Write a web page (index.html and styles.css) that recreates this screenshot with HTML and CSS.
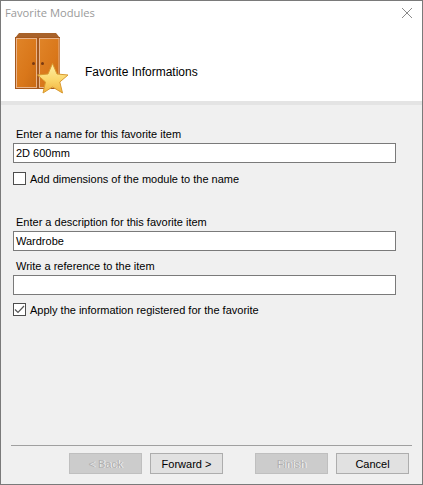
FILE: index.html
```html
<!DOCTYPE html>
<html lang="en">
<head>
<meta charset="utf-8">
<title>Favorite Modules</title>
<link rel="stylesheet" href="styles.css">
</head>
<body>
<div class="window">
  <div class="top">
    <div class="titlebar">
      <span class="title">Favorite Modules</span>
      <svg class="close" width="12" height="12" viewBox="0 0 12 12"><path d="M1 1 L11 11 M11 1 L1 11" stroke="#8a8a8a" stroke-width="1" fill="none"/></svg>
    </div>
    <div class="header">
      <svg class="logo" width="54" height="64" viewBox="0 0 54 64">
        <defs>
          <linearGradient id="wood" x1="0" y1="0" x2="1" y2="1">
            <stop offset="0" stop-color="#e08428"/>
            <stop offset="0.6" stop-color="#d9771a"/>
            <stop offset="1" stop-color="#c96a14"/>
          </linearGradient>
          <linearGradient id="gold" x1="0" y1="0" x2="0" y2="1">
            <stop offset="0" stop-color="#fff0a8"/>
            <stop offset="0.55" stop-color="#fbd76c"/>
            <stop offset="1" stop-color="#f2b23e"/>
          </linearGradient>
        </defs>
        <path d="M0 6 L4 1 H41 L45 6 Z" fill="#a8622a"/>
        <rect x="0" y="5" width="45" height="52" fill="#a4581e"/>
        <rect x="1.500" y="6.500" width="20" height="49" fill="url(#wood)" stroke="#eab48a"/>
        <rect x="24.500" y="6.500" width="19.500" height="49" fill="url(#wood)" stroke="#eab48a"/>
        <circle cx="18.500" cy="31.500" r="1.500" fill="#7a3a12"/>
        <circle cx="27.500" cy="31.500" r="1.500" fill="#7a3a12"/>
        <path d="M37.500 31.500 L42 42 L53 43 L44.800 50 L47.500 61 L37.500 55 L28 61 L30.500 50 L22.500 43 L33 42 Z" fill="url(#gold)" stroke="#d99a30" stroke-width="1" stroke-linejoin="round"/>
      </svg>
      <span class="heading">Favorite Informations</span>
    </div>
    <div class="band"></div>
  </div>
  <div class="form">
    <label class="field-label first">Enter a name for this favorite item</label>
    <div class="input">2D 600mm</div>
    <div class="check check-one">
      <span class="box"></span>
      <span>Add dimensions of the module to the name</span>
    </div>
    <label class="field-label second">Enter a description for this favorite item</label>
    <div class="input">Wardrobe</div>
    <label class="field-label third">Write a reference to the item</label>
    <div class="input"></div>
    <div class="check check-two">
      <span class="box"><svg width="11" height="11" viewBox="0 0 11 11"><path d="M1 5.500 L4 8.500 L10 2" stroke="#555" stroke-width="1.200" fill="none"/></svg></span>
      <span>Apply the information registered for the favorite</span>
    </div>
  </div>
  <div class="footer">
    <button class="btn" disabled>&lt; Back</button>
    <button class="btn">Forward &gt;</button>
    <button class="btn finish" disabled>Finish</button>
    <button class="btn">Cancel</button>
  </div>
</div>
</body>
</html>
```

FILE: styles.css
```css
* { box-sizing: border-box; }
html, body { margin: 0; padding: 0; }
body {
  width: 423px;
  height: 485px;
  overflow: hidden;
  font-family: "Liberation Sans", Arial, sans-serif;
  font-size: 11px;
  color: #000;
}
.window {
  width: 423px;
  height: 485px;
  display: flex;
  flex-direction: column;
  background: #f0f0f0;
  border: 1px solid #7a7a7a;
}
.top { background: #fff; }
.titlebar {
  height: 26px;
  display: flex;
  align-items: center;
  justify-content: space-between;
  padding: 0 9px 3px 4px;
}
.title {
  font-family: "Open Sans", "Noto Sans", sans-serif;
  font-size: 11.2px;
  color: #9a9a9a;
}
.close { display: block; }
.header {
  height: 74px;
  display: flex;
  align-items: flex-start;
  padding: 5px 0 0 14px;
}
.logo { display: block; }
.heading { margin-left: 16px; margin-top: 33px; color: #000; font-size: 12px; }
.band { height: 4px; background: #e4e4e4; }
.form {
  flex: 1;
  display: flex;
  flex-direction: column;
  padding: 21px 26px 0 12px;
}
.field-label { display: block; padding-left: 3px; height: 16px; line-height: 16px; }
.input {
  height: 20px;
  line-height: 18px;
  padding-left: 2px;
  background: #fff;
  border: 1px solid #7a7a7a;
  margin-top: 1px;
}
.second { margin-top: 29px; }
.third { margin-top: 7px; }
.check { display: flex; align-items: center; gap: 4px; height: 13px; }
.check-one { margin-top: 9px; }
.check-two { margin-top: 8px; }
.box {
  width: 13px;
  height: 13px;
  flex: none;
  display: flex;
  align-items: center;
  justify-content: center;
  background: #fff;
  border: 1px solid #4d4d4d;
}
.box svg { display: block; }
.footer {
  height: 39px;
  margin: 0 10px;
  padding: 7px 3px 0 58px;
  border-top: 1px solid #a0a0a0;
  display: flex;
  gap: 8px;
}
.btn {
  width: 73px;
  height: 21px;
  padding: 0;
  font: inherit;
  color: #000;
  background: #e1e1e1;
  border: 1px solid #adadad;
  border-radius: 0;
}
.btn:disabled {
  background: #cccccc;
  border-color: #bfbfbf;
  color: #b0b0b0;
  text-shadow: 1px 0 0 #f4f4f4;
}
.finish { margin-left: 24px; }
```
